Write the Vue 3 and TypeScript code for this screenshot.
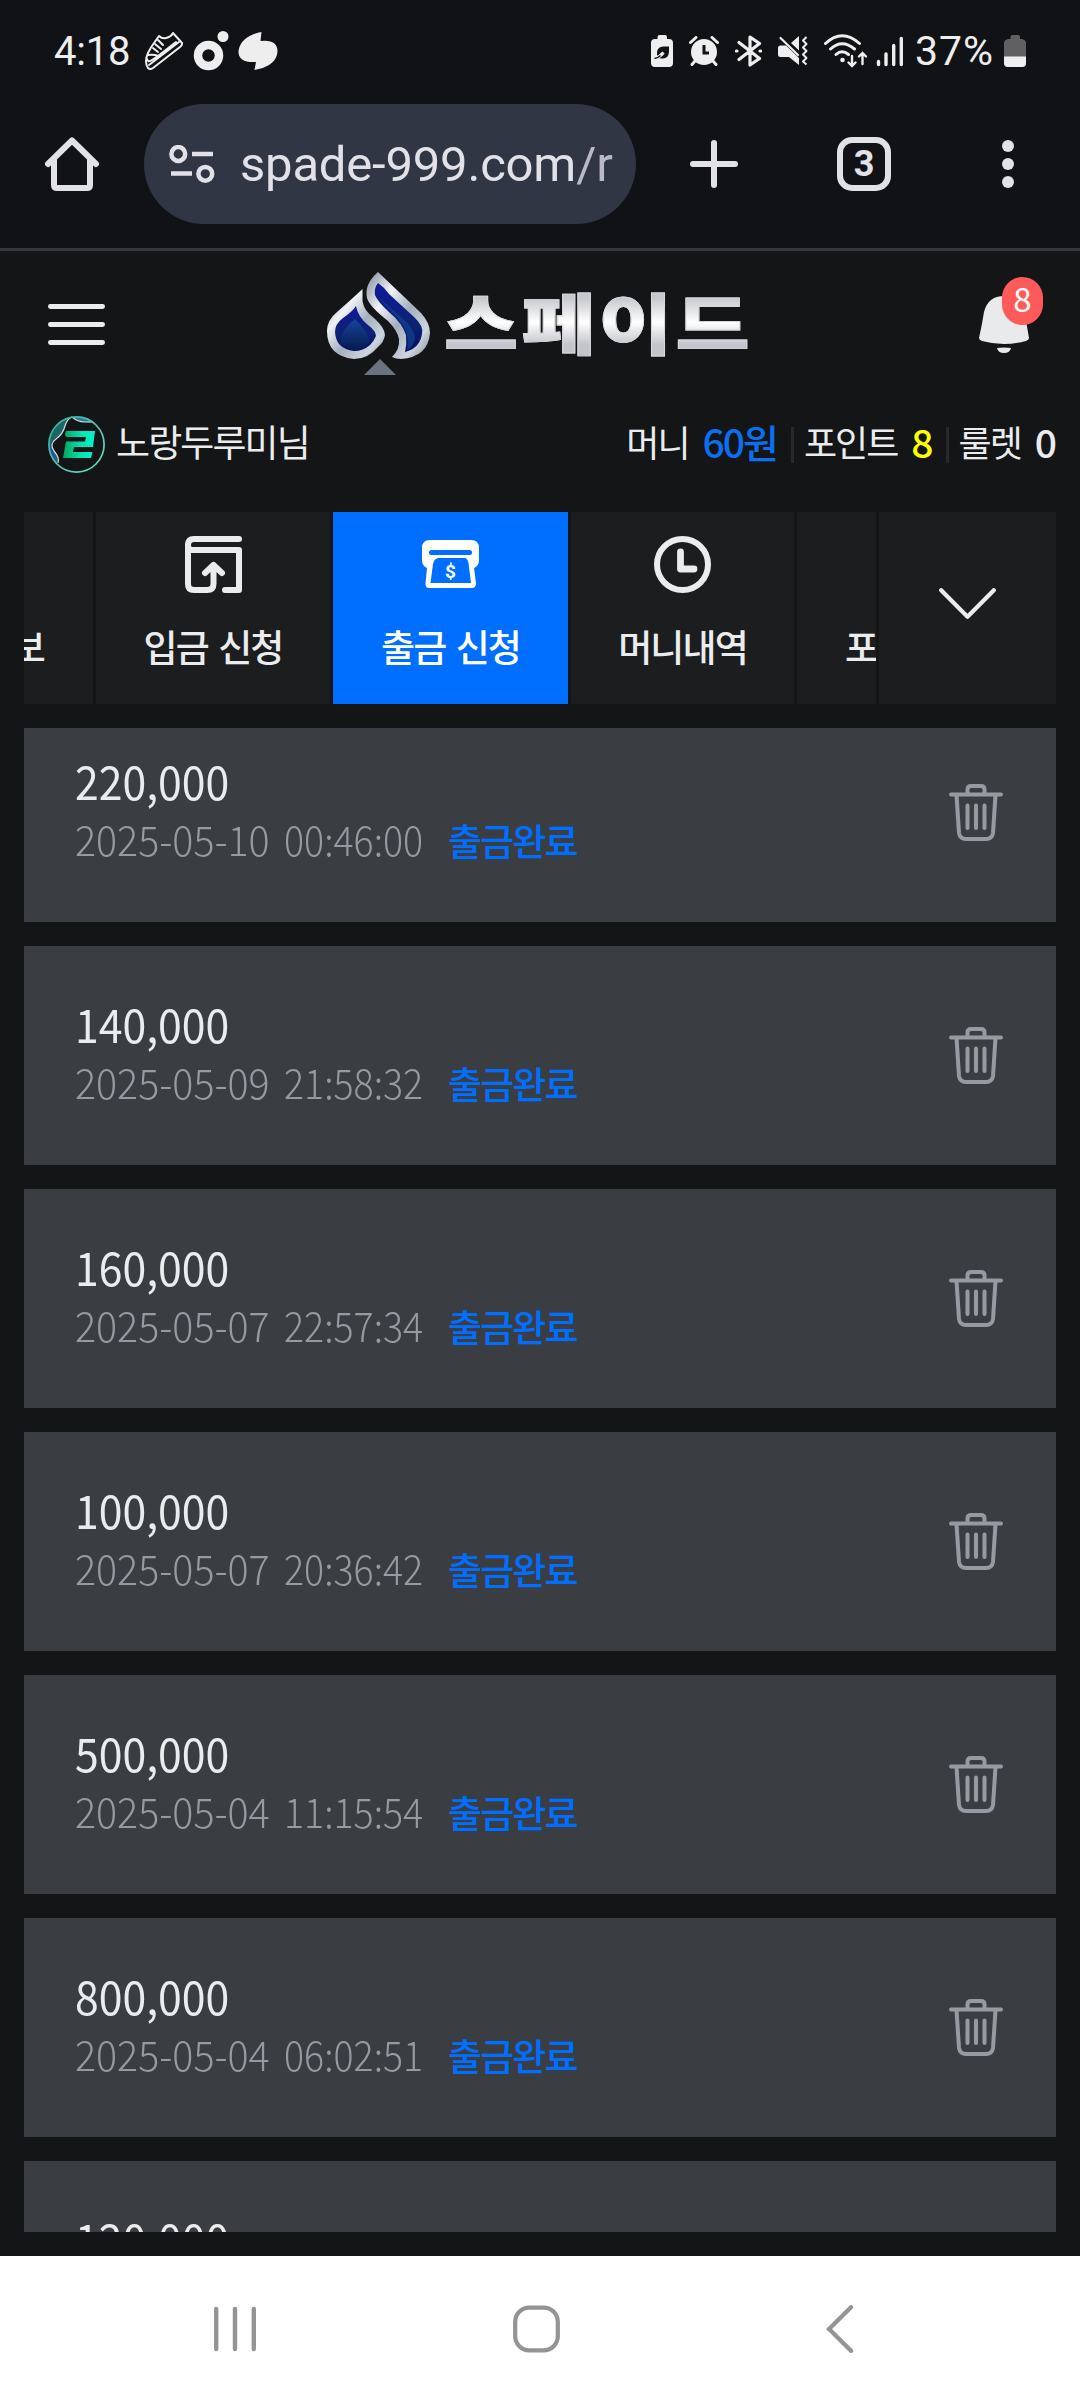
<script setup lang="ts">
interface Withdrawal {
  amount: string
  date: string
  time: string
}

const statusLabel = '출금완료'

const withdrawals: Withdrawal[] = [
  { amount: '220,000', date: '2025-05-10', time: '00:46:00' },
  { amount: '140,000', date: '2025-05-09', time: '21:58:32' },
  { amount: '160,000', date: '2025-05-07', time: '22:57:34' },
  { amount: '100,000', date: '2025-05-07', time: '20:36:42' },
  { amount: '500,000', date: '2025-05-04', time: '11:15:54' },
  { amount: '800,000', date: '2025-05-04', time: '06:02:51' },
  { amount: '120,000', date: '', time: '' },
]
</script>

<template>
  <div class="screen">
    <div class="status">
      <div class="status-left">
        <span class="clock">4:18</span>
        <svg class="shoe" width="40" height="40" viewBox="0 0 40 40" fill="none" stroke="#eee" stroke-width="2" stroke-linejoin="round" stroke-linecap="round">
          <path d="M29 2 L38 12 Q38.500 14 36 16 L9 37 Q6 39 4 37 Q0 31 4 22 Q7 16 10 12 L15 5 Q18 8 22 7 Q27 6 29 2 Z" />
          <path d="M5 34 L35 11 M3 28 Q4 32 8 29 L14 25 L32 11 M4 24 Q10 23 14 25 M9 17 l5 4 M11 13 l6 5 M14 9 l5 5" />
        </svg>
        <svg class="ring" width="36" height="40" viewBox="0 0 36 40">
          <circle cx="15.500" cy="24.500" r="10.500" fill="none" stroke="#eee" stroke-width="8.500" />
          <circle cx="30" cy="5.500" r="5.500" fill="#eee" />
        </svg>
        <svg class="blob" width="40" height="38" viewBox="0 0 40 38" fill="#eee">
          <path d="M23.500 0 L22.500 9 Q39 7 39.500 19 C39 31 28 36 16.500 38 L18 30 Q0 31 .5 19 C2 8 12 2 23.500 0 Z" />
        </svg>
      </div>
      <div class="status-right">
        <svg width="22" height="32" viewBox="0 0 22 32">
          <path d="M6.500 4 V2 Q6.500 0 8.500 0 H14 Q16 0 16 2 V4 H18 Q22 4 22 8 V28 Q22 32 18 32 H4 Q0 32 0 28 V8 Q0 4 4 4 Z" fill="#eee" />
          <path d="M18 11.500 V17 Q17.500 23 12 23.500 Q9 24 7 22 L6 20 Q5 12 12 11.500 Z" fill="#111216" />
          <path d="M3.500 23.500 Q9 22 12.500 17.500" fill="none" stroke="#eee" stroke-width="3" />
          <path d="M3.500 23.500 Q7 23 9.500 20.500" fill="none" stroke="#111216" stroke-width="1.300" />
        </svg>
        <svg width="30" height="30" viewBox="0 0 30 30">
          <circle cx="15" cy="16" r="13" fill="#eee" />
          <path d="M1.500 6.500 L7 1.500 M28.500 6.500 L23 1.500 M6 25 L3 28.500 M24 25 L27 28.500" stroke="#eee" stroke-width="3" stroke-linecap="round" />
          <path d="M15 9 V17 H20" fill="none" stroke="#111216" stroke-width="3" />
        </svg>
        <svg width="27" height="32" viewBox="0 0 27 32" fill="none" stroke="#eee" stroke-width="3.200" stroke-linejoin="round" stroke-linecap="round">
          <path d="M4 7.500 L24.500 23.500 L15 30 V2 L24.500 8.500 L4 24.500 M1.500 16 H2 M25 16 H25.500" />
        </svg>
        <svg width="30" height="30" viewBox="0 0 30 30">
          <path d="M2.500 9.500 H8 L21 22 V29 L11 21 H2.500 Q0 21 0 18.500 V12 Q0 9.500 2.500 9.500 Z M13 7 L21 0 V14.500 Z" fill="#eee" />
          <path d="M2.500 2 L20 19" stroke="#eee" stroke-width="2.200" stroke-linecap="round" />
          <path d="M28.500 1 L25 4.500 L28.500 8 L25 11.500 L28.500 15 L25 18.500 L28.500 22 L25 25.500 L28.500 28.500" fill="none" stroke="#eee" stroke-width="2" stroke-linejoin="round" />
        </svg>
        <svg width="43" height="34" viewBox="0 0 43 34" fill="none" stroke="#eee" stroke-width="3" stroke-linecap="round">
          <path d="M1.500 9.500 Q18 -6 35.500 9.500 M6.500 15 Q18 4.500 30.500 15 M12 20.500 Q18 15 24.500 20.500" />
          <circle cx="18.500" cy="26" r="1.300" fill="#eee" stroke-width="2" />
          <path d="M28 22 V32 M24.500 28.500 L28 32 L31.500 28.500 M38.500 30 V19 M35 22.500 L38.500 19 L42 22.500" stroke-width="2.400" />
        </svg>
        <svg width="28" height="31" viewBox="0 0 28 31" stroke="#eee" stroke-width="3.400" stroke-linecap="round">
          <path d="M2.500 25.500 V28.500 M10 18 V28.500 M17.700 9.500 V28.500 M25.300 2.500 V28.500" />
        </svg>
        <span class="pct">37%</span>
        <svg width="22" height="32" viewBox="0 0 22 32">
          <path d="M6.500 4 V2 Q6.500 0 8.500 0 H14 Q16 0 16 2 V4 H18 Q22 5 22 8 V28 Q22 32 18 32 H4 Q0 32 0 28 V8 Q0 5 4 4 Z" fill="#606062" />
          <path d="M0 21.500 H22 V28 Q22 32 18 32 H4 Q0 32 0 28 Z" fill="#eee" />
        </svg>
      </div>
    </div>

    <div class="browser">
      <svg class="home" width="54" height="54" viewBox="0 0 54 54" fill="none" stroke="#e3e1e8" stroke-width="6" stroke-linecap="round" stroke-linejoin="round">
        <path d="M3 27 L27 3.500 L51 27" />
        <path d="M9 22 V48 Q9 51 12 51 H42 Q45 51 45 48 V22" />
      </svg>
      <div class="pill">
        <svg width="46" height="38" viewBox="0 0 46 38" fill="none" stroke="#e3e1e8" stroke-width="4.500">
          <circle cx="9.300" cy="9" r="6.900" />
          <path d="M23 9 H44 M2 28.500 H23" />
          <circle cx="36.300" cy="28.800" r="6.900" />
        </svg>
        <span class="url">spade-999.com<i>/r</i></span>
      </div>
      <svg class="plus" width="48" height="48" viewBox="0 0 48 48" stroke="#e3e1e8" stroke-width="6" stroke-linecap="round">
        <path d="M24 3 V45 M3 24 H45" />
      </svg>
      <div class="tabcount">3</div>
      <svg class="dots" width="12" height="48" viewBox="0 0 12 48" fill="#e3e1e8">
        <circle cx="6" cy="6" r="6" /><circle cx="6" cy="24" r="6" /><circle cx="6" cy="42" r="6" />
      </svg>
    </div>

    <header class="site">
      <svg class="menu" width="57" height="41" viewBox="0 0 57 41" stroke="#ebecee" stroke-width="4.800" stroke-linecap="round">
        <path d="M2.400 2.500 H54.600 M2.400 20.500 H54.600 M2.400 38.500 H54.600" />
      </svg>
      <div class="logo">
        <svg width="104" height="104" viewBox="0 0 104 104">
          <defs>
            <linearGradient id="steel" x1="0" y1="0" x2="1" y2="1">
              <stop offset="0" stop-color="#7e8998" /><stop offset=".3" stop-color="#f1f3f7" />
              <stop offset=".55" stop-color="#a4afbf" /><stop offset=".8" stop-color="#cdd5df" />
              <stop offset="1" stop-color="#7d8a9c" />
            </linearGradient>
            <linearGradient id="navy" x1="0" y1="0" x2="0" y2="1">
              <stop offset="0" stop-color="#11189a" /><stop offset=".6" stop-color="#0c2373" /><stop offset="1" stop-color="#080e5c" />
            </linearGradient>
            <linearGradient id="deep" x1="0" y1="0" x2="0" y2="1">
              <stop offset="0" stop-color="#14469a" /><stop offset="1" stop-color="#061a50" />
            </linearGradient>
          </defs>
          <path d="M35.500 17 V29 Q37 39 47 46 Q58 56 58 63 Q57 70 51 75 Q41 87 27 87 Q0 84 0 59 Q0 48 10 40 Q26 26 35.500 17 Z" fill="url(#steel)" />
          <path d="M29 34 Q31 45 41 53 Q49 59 49 64 Q47 69 43 73 Q36 79 27 79 Q9 77 8 60 Q8 52 16 46 Q26 39 29 34 Z" fill="url(#navy)" />
          <path d="M28 47 Q14 58 13 69 Q19 78 28 78 Q38 77 43 69 Q40 59 28 47 Z" fill="url(#deep)" />
          <path d="M51 0 L94 41 Q103 51 103 61 Q101 85 74 87 Q69 87 65 85 Q73 77 72 67 Q70 58 61 49 Q42 34 40 26 Q37 12 51 0 Z" fill="url(#steel)" />
          <path d="M51 11 Q57 15 62 22 L87 45 Q97 54 95 62 Q93 76 78 80 Q80 72 79 63 Q75 51 63 41 Q50 29 48 23 Q47 16 51 11 Z" fill="url(#navy)" />
          <path d="M52 25 Q62 35 74 45 Q88 57 88 67 Q86 75 80 78 Q82 67 78 57 Q74 49 64 39 Q56 32 52 25 Z" fill="#10408e" opacity=".75" />
          <path d="M53 87 L69 103 H37 Z" fill="#6b7380" />
        </svg>
        <span class="wordmark">스페이드</span>
      </div>
      <div class="bell">
        <svg width="50" height="57" viewBox="0 0 50 57" fill="#e9eaec">
          <path d="M25 0 Q9 0 5 16 Q3 29 0 42 Q0 44 3 45 Q25 51 47 45 Q50 44 50 42 Q48 29 45 16 Q41 0 25 0 Z" />
          <path d="M18 52 Q25 51 32 52 Q31 57 25 57 Q19 57 18 52 Z" />
        </svg>
        <span class="badge">8</span>
      </div>
    </header>

    <div class="user">
      <svg class="avatar" width="57" height="57" viewBox="0 0 57 57">
        <defs>
          <linearGradient id="mint" x1="0" y1="0" x2="1" y2="0">
            <stop offset="0" stop-color="#08a45d" /><stop offset=".6" stop-color="#05e6b4" /><stop offset="1" stop-color="#04efcb" />
          </linearGradient>
          <linearGradient id="rim" x1="0" y1="0" x2="1" y2="1">
            <stop offset="0" stop-color="#2ea885" /><stop offset=".5" stop-color="#57c6ba" /><stop offset="1" stop-color="#66e0b8" />
          </linearGradient>
        </defs>
        <path d="M24 1 Q7 3 2 20 Q-1 37 9 47 Q13 43 6 35 Q1 28 8 22 Q15 19 17 9 Q19 3 24 1 Z" fill="#1c6668" />
        <path d="M22 1 Q38 -1 45 6 Q36 7 31 5 Q27 2 22 1 Z" fill="#237ba0" />
        <path d="M2 22 Q-1 36 8 46 Q7 38 3 31 Z" fill="#2450a8" />
        <path d="M24 1 Q19 3 17 10 Q15 18 8 23 Q1 28 6 35 Q12 42 10 47 M24 1 Q30 6 36 6 Q41 6 45 6" fill="none" stroke="#cde2e0" stroke-width="1.200" />
        <circle cx="28.500" cy="28.500" r="27.600" fill="none" stroke="url(#rim)" stroke-width="1.700" />
        <path d="M18 15 H47 L45 31 H26 L25 36 H44.500 L43 42 H15 L18 25.500 H37 L38 21 H18.500 Q16 19 18 15 Z" fill="url(#mint)" />
      </svg>
      <span class="nick">노랑두루미님</span>
      <div class="stats">
        <span class="stat"><em>머니</em> <b class="blue">60원</b></span>
        <span class="stat"><em>포인트</em> <b class="yellow">8</b></span>
        <span class="stat"><em>룰렛</em> <b>0</b></span>
      </div>
    </div>

    <nav class="tabs">
      <div class="tab tab-prev"><span>보</span></div>
      <div class="tab tab-deposit">
        <svg width="57" height="57" viewBox="0 0 57 57" fill="none" stroke="#ebecee" stroke-width="6" stroke-linecap="round" stroke-linejoin="round">
          <path d="M54 3 H9 Q3 3 3 9 Q3 14 7 14 H54 V54 H40" />
          <path d="M3 9 V48 Q3 54 9 54 H22 Q28.500 54 28.500 48 V29 M20 37 L28.500 29 L37 37" />
        </svg>
        <span>입금 신청</span>
      </div>
      <div class="tab tab-withdraw">
        <svg width="57" height="57" viewBox="0 0 57 57">
          <path d="M8 4 H49 Q57 4 57 12 V24 Q57 30 52 32 L54 47 Q54 52 50 52 H7 Q3 52 3.500 47 L5 32 Q0 30 0 24 V12 Q0 4 8 4 Z" fill="#fff" />
          <path d="M9.500 16.500 H47.500" stroke="#006fff" stroke-width="5" stroke-linecap="round" />
          <path d="M16 22 H43 Q46 23 46.500 27 L49 47 H8.500 L11 28 Q12 23 16 22 Z" fill="#006fff" />
          <text x="28.500" y="41.500" text-anchor="middle" fill="#fff">$</text>
        </svg>
        <span>출금 신청</span>
      </div>
      <div class="tab tab-history">
        <svg width="57" height="57" viewBox="0 0 57 57" fill="none" stroke="#ebecee" stroke-linecap="round" stroke-linejoin="round">
          <circle cx="28.500" cy="28.500" r="25.500" stroke-width="6" />
          <path d="M26.500 16 V33 H40" stroke-width="6.800" />
        </svg>
        <span>머니내역</span>
      </div>
      <div class="tab tab-next"><span>포</span></div>
      <div class="tab tab-more">
        <svg width="57" height="32" viewBox="0 0 57 32" fill="none" stroke="#ebecee" stroke-width="4.200" stroke-linecap="round" stroke-linejoin="round">
          <path d="M2.200 2.200 L28.500 28.800 L54.800 2.200" />
        </svg>
      </div>
    </nav>

    <main class="viewport">
      <div class="list">
        <article v-for="item in withdrawals" :key="item.amount" class="card">
          <div class="info">
            <div class="amount">{{ item.amount }}</div>
            <div v-if="item.date" class="meta">
              <span class="date">{{ item.date }}</span>
              <span class="time">{{ item.time }}</span>
              <span class="state">{{ statusLabel }}</span>
            </div>
            <div v-else class="meta"></div>
          </div>
          <svg width="54" height="57" viewBox="0 0 54 57" fill="none" stroke="#969aa3" stroke-width="4" stroke-linecap="round" stroke-linejoin="round">
            <path d="M2 10.500 H52 M18.500 10 V5.500 Q18.500 2 22 2 H32 Q35.500 2 35.500 5.500 V10" />
            <path d="M7.500 11 L10 49 Q11 55 17 55 H37 Q43 55 44 49 L46.500 11" />
            <path d="M18.500 21.500 V44 M27 21.500 V44 M35.500 21.500 V44" />
          </svg>
        </article>
      </div>
    </main>

    <footer class="navbar">
      <svg width="42" height="48" viewBox="0 0 42 48" stroke="#949494" stroke-width="4.400" stroke-linecap="round">
        <path d="M2.200 4 V44 M21 4 V44 M39.800 4 V44" />
      </svg>
      <svg class="nav-home" width="47" height="48" viewBox="0 0 47 48" fill="none" stroke="#949494" stroke-width="4.200">
        <rect x="2.200" y="2.700" width="42.600" height="42.600" rx="14" />
      </svg>
      <svg width="28" height="48" viewBox="0 0 28 48" fill="none" stroke="#949494" stroke-width="4.400" stroke-linecap="round">
        <path d="M25 2.200 L3 24 L25 45.800" />
      </svg>
    </footer>
  </div>
</template>

<style scoped>
.screen {
  width: 1080px;
  height: 2400px;
  overflow: hidden;
  background: #141517;
  color: #ebecee;
  font-family: "Noto Sans CJK KR", sans-serif;
  display: flex;
  flex-direction: column;
}
svg { display: block; flex: none; }
span, .amount { white-space: nowrap; }

.status {
  height: 104px;
  flex: none;
  background: #111216;
  display: flex;
  justify-content: space-between;
  padding: 0 54px;
  font-family: Roboto, sans-serif;
  font-size: 40px;
  color: #eee;
}
.status-left, .status-right { display: flex; height: 102px; align-items: center; }
.clock { width: 90px; letter-spacing: -.2px; }
.shoe { margin-right: 9px; }
.ring { margin-right: 9px; }
.status-right { gap: 16px; }
.pct { width: 80px; font-size: 41px; letter-spacing: 1px; margin-left: -5px; margin-right: -7px; }
.status-right svg:nth-child(6) { margin-left: -7px; }

.browser {
  height: 144px;
  flex: none;
  background: #111216;
  border-bottom: 3px solid #36373a;
  display: flex;
  align-items: flex-start;
}
.home { margin: 33px 45px 0; }
.pill {
  width: 492px;
  height: 120px;
  border-radius: 60px;
  background: #313644;
  display: flex;
  align-items: center;
  padding-left: 25px;
  box-sizing: border-box;
  flex: none;
}
.url {
  margin-left: 25px;
  font-family: Roboto, sans-serif;
  font-size: 49px;
  color: #e3e1e8;
  letter-spacing: -.2px;
}
.url i { font-style: normal; color: #b9bac4; }
.plus { margin: 36px 0 0 54px; }
.tabcount {
  width: 54px;
  height: 54px;
  margin: 33px 0 0 99px;
  box-sizing: border-box;
  border: 6px solid #e3e1e8;
  border-radius: 15px;
  font: 700 36px/43px Roboto, sans-serif;
  text-align: center;
  color: #e3e1e8;
  flex: none;
}
.dots { margin: 36px 0 0 111px; }

.site {
  height: 147px;
  flex: none;
  display: flex;
  align-items: center;
  padding: 0 51px 0 48px;
  justify-content: space-between;
}
.menu { margin-top: -1px; }
.logo { display: flex; align-items: center; width: 424px; margin-left: -7px; margin-top: -1px; }
.wordmark {
  font-weight: 900;
  font-size: 79px;
  line-height: 90px;
  margin: -8px 0 0 13px;
  letter-spacing: 3px;
  background: linear-gradient(#c7c8ce 20%, #fff 52%, #c4c5cc 82%);
  -webkit-background-clip: text;
  background-clip: text;
  color: transparent;
  -webkit-text-stroke: 1px #d8d9dd;
  transform: scale(1.02, .83);
  transform-origin: left 54%;
}
.bell { position: relative; }
.badge {
  position: absolute;
  left: 23px;
  top: -19px;
  width: 41px;
  height: 48px;
  border-radius: 21px;
  background: #ff5a5a;
  color: #fff;
  font-size: 33px;
  line-height: 43px;
  text-align: center;
}

.user {
  height: 93px;
  flex: none;
  display: flex;
  align-items: center;
  padding: 0 25px 0 48px;
  font-size: 37px;
}
.nick { margin: -7px 0 0 11px; letter-spacing: -1.900px; }
.stats { margin: 0 0 0 auto; display: flex; align-items: center; }
.stat {
  display: flex;
  align-items: center;
  gap: 14px;
  height: 36px;
  line-height: 30px;
  font-size: 36px;
  letter-spacing: -2px;
}
.stat em { font-style: normal; margin-top: -8px; }
.stat b { font-weight: 500; font-size: 39px; margin-top: -8px; }
.stat + .stat { border-left: 3px solid #27292d; margin-left: 14px; padding-left: 10px; }
.blue { color: #0d6fee; }
.yellow { color: #ff0; }

.tabs {
  height: 192px;
  flex: none;
  margin: 21px 24px 24px;
  display: flex;
  gap: 3px;
  font-size: 37px;
  font-weight: 500;
}
.tab {
  background: #1c1d1f;
  box-sizing: border-box;
  padding-top: 24px;
  overflow: hidden;
  display: flex;
  flex-direction: column;
  align-items: center;
  flex: none;
  letter-spacing: -1.900px;
  word-spacing: 4px;
}
.tab span { line-height: 54px; margin-top: 26px; }
.tab-prev { width: 69px; align-items: flex-end; padding-right: 49px; }
.tab-prev span, .tab-next span { margin-top: 83px; }
.tab-deposit { width: 234px; }
.tab-withdraw { width: 235px; }
.tab-withdraw { background: #006fff; color: #fff; }
.tab-withdraw text { font: 700 19px Roboto, sans-serif; letter-spacing: 0; }
.tab-history { width: 223px; }
.tab-next { width: 79px; align-items: flex-start; padding-left: 48px; }
.tab-more { width: 177px; padding-top: 0; justify-content: center; padding-bottom: 9px; }

.viewport { height: 1504px; flex: none; margin: 0 24px 24px; overflow: hidden; }
.list { display: flex; flex-direction: column; gap: 24px; margin-top: -25px; }
.card {
  height: 219px;
  flex: none;
  box-sizing: border-box;
  background: #3a3e42;
  display: flex;
  align-items: center;
  justify-content: space-between;
  padding: 0 53px 0 51px;
}
.info { margin-top: -7px; }
.amount {
  font-size: 46px;
  line-height: 58px;
  transform: scaleX(.93);
  transform-origin: left;
}
.meta { display: flex; align-items: center; height: 58px; }
.date, .time { color: #969aa3; font-size: 41px; font-weight: 300; transform-origin: left; }
.date { width: 209px; transform: scaleX(.96); }
.time { width: 164px; transform: scaleX(.915); }
.state { color: #006fff; font-size: 37px; font-weight: 500; letter-spacing: -1.900px; padding-top: 4px; }

.navbar {
  height: 144px;
  flex: none;
  background: #fff;
  display: flex;
  align-items: center;
  justify-content: space-between;
  padding: 2px 226px 0 214px;
  box-sizing: border-box;
}
.nav-home { margin: 0 9px 0 0; }
</style>

<style>
body { margin: 0; background: #141517; }
</style>
